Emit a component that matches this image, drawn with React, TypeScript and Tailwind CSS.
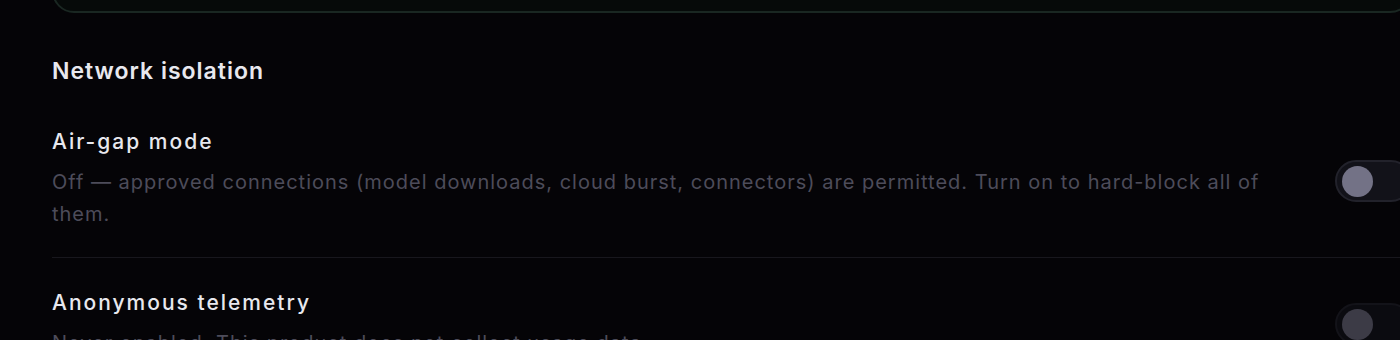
import React from "react";

function Toggle({ dim }: { dim?: boolean }) {
  return (
    <div
      className={`relative h-[42px] w-[77px] shrink-0 rounded-full border-2 border-[#22222b] bg-[#121219] ${dim ? "opacity-50" : ""}`}
    >
      <div className="absolute left-[5px] top-[3.5px] h-[31px] w-[31px] rounded-full bg-[#737286]" />
    </div>
  );
}

export default function App() {
  return (
    <div
      className="h-[340px] w-[1400px] overflow-hidden bg-[#050407] text-[#e6e6ec]"
      style={{ fontFamily: "Inter, 'Noto Sans', sans-serif" }}
    >
      <div className="ml-[52px] w-[1360px]">
        <div className="-mt-[40px] h-[53px] rounded-[22px] border-2 border-[#1a2722] bg-[#060a09]" />
        <h2 className="mt-[43px] text-[23px] font-semibold leading-[30px] tracking-[1px] text-[#e8e8ee]">
          Network isolation
        </h2>
        <div className="mt-[42px] flex items-center gap-[40px] pb-[27px]">
          <div className="flex-1">
            <div className="text-[21px] font-medium leading-[28px] tracking-[2px] text-[#e8e8ee]">Air-gap mode</div>
            <p className="mt-[10px] pr-[6px] text-[20px] leading-[32px] tracking-[1px] text-[#4d4c5a]">
              Off — approved connections (model downloads, cloud burst, connectors) are permitted. Turn on to hard-block all of them.
            </p>
          </div>
          <div className="mt-[4px]">
            <Toggle />
          </div>
        </div>
        <div className="h-px bg-[#18171d]" />
        <div className="mt-[31px] flex items-center gap-[40px]">
          <div className="flex-1">
            <div className="text-[21px] font-medium leading-[28px] tracking-[2px] text-[#e8e8ee]">Anonymous telemetry</div>
            <p className="mt-[10px] text-[20px] leading-[32px] tracking-[1px] text-[#4d4c5a]">
              Never enabled. This product does not collect usage data.
            </p>
          </div>
          <Toggle dim />
        </div>
      </div>
    </div>
  );
}
